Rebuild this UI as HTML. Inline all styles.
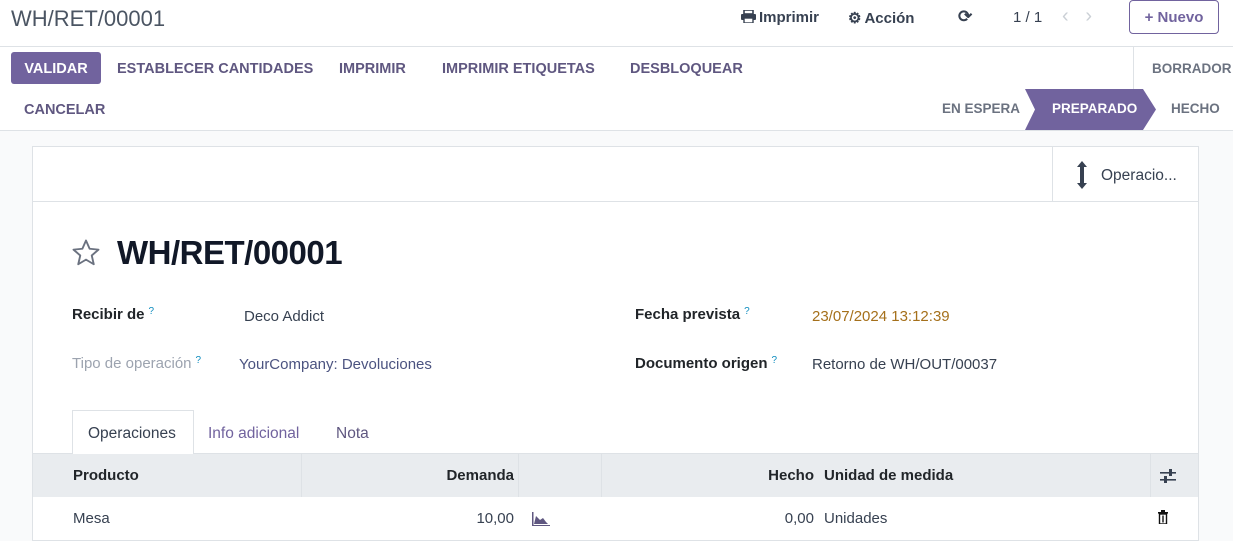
<!DOCTYPE html>
<html><head><meta charset="utf-8"><style>
*{box-sizing:border-box;margin:0;padding:0}
html,body{width:1233px;height:541px;overflow:hidden}
body{background:#f9fafb;font-family:"Liberation Sans",sans-serif;color:#374151;position:relative}
.a{position:absolute;white-space:nowrap}
.top{position:absolute;left:0;top:0;width:1233px;height:131px;background:#fff;border-bottom:1px solid #dee2e6}
.b{font-weight:bold;font-size:14.5px;color:#5f5780}
.card{position:absolute;left:32px;top:146px;width:1167px;height:395px;background:#fff;border:1px solid #dee2e6;border-bottom:none}
.lbl{font-weight:bold;font-size:15px;color:#212529}
.q{font-size:10px;color:#0f8dbf;vertical-align:top;margin-left:4px;font-weight:normal}
.v{font-size:15px;color:#374151}
.th{font-weight:bold;font-size:15px;color:#212529}
</style></head><body>
<div class="top"></div>
<div class="a" style="left:0;top:46px;width:1233px;border-top:1px solid #dee2e6"></div>
<div class="a" style="left:11px;top:6px;font-size:22px;color:#4b5563">WH/RET/00001</div>
<div class="a" style="left:741px;top:9px;font-size:15px;font-weight:bold;color:#374151">
<svg width="15" height="13" viewBox="0 0 15 13" style="vertical-align:-1px;margin-right:3px"><rect x="3" y="0" width="9" height="4" fill="none" stroke="#374151" stroke-width="1.6"/><rect x="0" y="4" width="15" height="6" rx="1" fill="#374151"/><rect x="3" y="8" width="9" height="5" fill="#fff" stroke="#374151" stroke-width="1.4"/></svg>Imprimir</div>
<div class="a" style="left:848px;top:9px;font-size:15px;font-weight:bold;color:#374151"><span style="font-size:15px;margin-right:3px">⚙</span>Acción</div>
<div class="a" style="left:958px;top:7px;font-size:17px;font-weight:bold;color:#374151">⟳</div>
<div class="a" style="left:1013px;top:9px;font-size:15px;color:#374151">1 / 1</div>
<div class="a" style="left:1062px;top:5px;font-size:20px;color:#cbd0d6">‹&nbsp;&nbsp;&nbsp;›</div>
<div class="a" style="left:1129px;top:0px;width:90px;height:34px;border:1px solid #71639e;border-radius:4px;color:#71639e;font-weight:bold;font-size:15px;padding-top:8px;text-align:center">+ Nuevo</div>

<div class="a" style="left:11px;top:52px;width:90px;height:32px;background:#71639e;border-radius:3px;color:#fff;font-weight:bold;font-size:14.5px;text-align:center;padding-top:9px">VALIDAR</div>
<div class="a b" style="left:117px;top:61px">ESTABLECER CANTIDADES</div>
<div class="a b" style="left:339px;top:61px">IMPRIMIR</div>
<div class="a b" style="left:442px;top:61px">IMPRIMIR ETIQUETAS</div>
<div class="a b" style="left:630px;top:61px">DESBLOQUEAR</div>
<div class="a b" style="left:24px;top:102px">CANCELAR</div>
<div class="a" style="left:1133px;top:47px;height:42px;border-left:1px solid #dee2e6"></div>
<div class="a" style="left:1152px;top:61px;font-size:13.5px;font-weight:bold;color:#6b7280">BORRADOR</div>
<div class="a" style="left:942px;top:101px;font-size:13.5px;font-weight:bold;color:#6b7280">EN ESPERA</div>
<svg class="a" style="left:1025px;top:89px" width="132" height="41"><polygon points="0,0 118,0 131,20.5 118,41 0,41 10,20.5" fill="#71639e"/></svg>
<div class="a" style="left:1052px;top:101px;font-size:13.5px;font-weight:bold;color:#fff">PREPARADO</div>
<div class="a" style="left:1171px;top:101px;font-size:13.5px;font-weight:bold;color:#6b7280">HECHO</div>

<div class="card"></div>
<div class="a" style="left:33px;top:201px;width:1165px;border-top:1px solid #dee2e6"></div>
<div class="a" style="left:1052px;top:147px;height:54px;border-left:1px solid #dee2e6"></div>
<svg class="a" style="left:1076px;top:161px" width="12" height="28" viewBox="0 0 12 28"><polygon points="6,0 11,6 8,6 8,22 11,22 6,28 1,22 4,22 4,6 1,6" fill="#374151"/></svg>
<div class="a" style="left:1101px;top:167px;font-size:15.5px;color:#374151">Operacio...</div>

<svg class="a" style="left:70px;top:238px" width="32" height="30" viewBox="0 0 24 24"><polygon points="12,2 14.9,8.6 22,9.3 16.6,14 18.2,21 12,17.3 5.8,21 7.4,14 2,9.3 9.1,8.6" fill="none" stroke="#6b7280" stroke-width="1.5" stroke-linejoin="round"/></svg>
<div class="a" style="left:117px;top:234px;font-size:33px;font-weight:bold;color:#111827;letter-spacing:-0.5px">WH/RET/00001</div>

<div class="a lbl" style="left:72px;top:306px">Recibir de<span class="q">?</span></div>
<div class="a v" style="left:244px;top:308px">Deco Addict</div>
<div class="a lbl" style="left:72px;top:355px;color:#9ca3af;font-weight:normal">Tipo de operación<span class="q">?</span></div>
<div class="a v" style="left:239px;top:356px;color:#4b5380">YourCompany: Devoluciones</div>
<div class="a lbl" style="left:635px;top:306px">Fecha prevista<span class="q">?</span></div>
<div class="a v" style="left:812px;top:308px;color:#a5701b">23/07/2024 13:12:39</div>
<div class="a lbl" style="left:635px;top:355px">Documento origen<span class="q">?</span></div>
<div class="a v" style="left:812px;top:356px">Retorno de WH/OUT/00037</div>

<div class="a" style="left:72px;top:410px;width:122px;height:44px;background:#fff;border:1px solid #dee2e6;border-bottom:none;z-index:2"></div>
<div class="a" style="left:88px;top:425px;font-size:15.5px;color:#374151;z-index:3">Operaciones</div>
<div class="a" style="left:208px;top:425px;font-size:15.5px;color:#71639e">Info adicional</div>
<div class="a" style="left:336px;top:425px;font-size:15.5px;color:#5f5780">Nota</div>
<div class="a" style="left:33px;top:453px;width:1165px;height:44px;background:#e9ecef;border-top:1px solid #dee2e6"></div>
<div class="a" style="left:301px;top:454px;height:43px;border-left:1px solid #dee2e6"></div>
<div class="a" style="left:518px;top:454px;height:43px;border-left:1px solid #dee2e6"></div>
<div class="a" style="left:601px;top:454px;height:43px;border-left:1px solid #dee2e6"></div>
<div class="a" style="left:1150px;top:454px;height:43px;border-left:1px solid #dee2e6"></div>
<div class="a th" style="left:73px;top:467px">Producto</div>
<div class="a th" style="left:414px;top:467px;width:100px;text-align:right">Demanda</div>
<div class="a th" style="left:714px;top:467px;width:100px;text-align:right">Hecho</div>
<div class="a th" style="left:824px;top:467px">Unidad de medida</div>
<svg class="a" style="left:1160px;top:469px" width="16" height="14"><rect x="0" y="3" width="16" height="1.6" fill="#374151"/><rect x="0" y="10" width="16" height="1.6" fill="#374151"/><rect x="9" y="0" width="3" height="7" fill="#374151"/><rect x="4" y="7" width="3" height="7" fill="#374151"/></svg>
<div class="a v" style="left:73px;top:510px">Mesa</div>
<div class="a v" style="left:414px;top:510px;width:100px;text-align:right">10,00</div>
<svg class="a" style="left:532px;top:512px" width="18" height="14"><path d="M0,0 V14 H18 V13 H1.5 V0Z" fill="#5f5780"/><path d="M2,12 L4,4 L8,8 L11,6 L14,10 L16,12Z" fill="#5f5780"/></svg>
<div class="a v" style="left:714px;top:510px;width:100px;text-align:right">0,00</div>
<div class="a v" style="left:824px;top:510px">Unidades</div>
<svg class="a" style="left:1157px;top:510px" width="12" height="14"><rect x="1" y="2" width="10" height="1.6" fill="#111"/><rect x="4" y="0" width="4" height="2" fill="#111"/><rect x="2.5" y="4" width="7" height="10" fill="none" stroke="#111" stroke-width="1.4"/><rect x="5.3" y="5.5" width="1.4" height="7" fill="#111"/></svg>
<div class="a" style="left:33px;top:540px;width:1165px;border-top:1px solid #dee2e6"></div>
</body></html>
